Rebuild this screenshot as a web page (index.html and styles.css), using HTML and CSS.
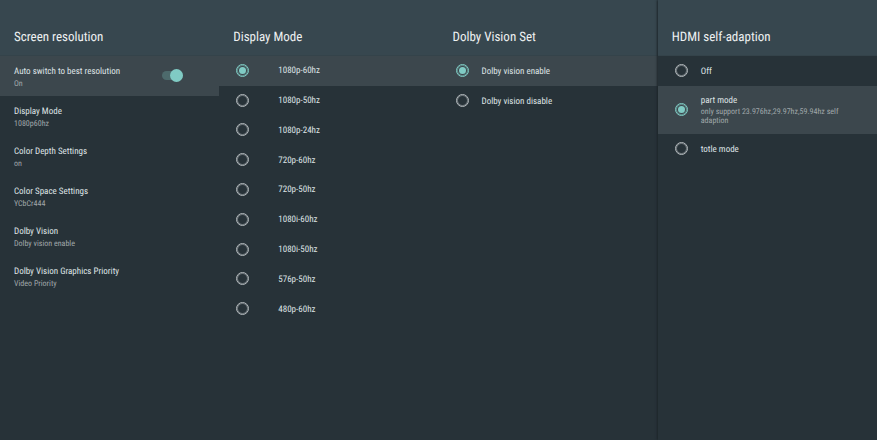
FILE: index.html
```html
<!DOCTYPE html>
<html lang="en">
<head>
<meta charset="utf-8">
<title>Screen resolution</title>
<link rel="stylesheet" href="styles.css">
</head>
<body>
<main class="panels">
  <section class="panel">
    <h2 class="title">Screen resolution</h2>
    <ul class="list settings">
      <li class="row active">
        <label class="text" for="auto"><span class="name">Auto switch to best resolution</span><span class="note">On</span></label>
        <input class="switch" type="checkbox" role="switch" id="auto" checked>
      </li>
      <li class="row"><a class="text" href="#mode"><span class="name">Display Mode</span><span class="note">1080p60hz</span></a></li>
      <li class="row"><a class="text" href="#depth"><span class="name">Color Depth Settings</span><span class="note">on</span></a></li>
      <li class="row"><a class="text" href="#space"><span class="name">Color Space Settings</span><span class="note">YCbCr444</span></a></li>
      <li class="row"><a class="text" href="#vision"><span class="name">Dolby Vision</span><span class="note">Dolby vision enable</span></a></li>
      <li class="row"><a class="text" href="#priority"><span class="name">Dolby Vision Graphics Priority</span><span class="note">Video Priority</span></a></li>
    </ul>
  </section>
  <section class="panel">
    <h2 class="title">Display Mode</h2>
    <div class="list modes">
      <label class="option wide active"><input class="radio" type="radio" name="mode" checked><span class="name">1080p-60hz</span></label>
      <label class="option wide"><input class="radio" type="radio" name="mode"><span class="name">1080p-50hz</span></label>
      <label class="option wide"><input class="radio" type="radio" name="mode"><span class="name">1080p-24hz</span></label>
      <label class="option wide"><input class="radio" type="radio" name="mode"><span class="name">720p-60hz</span></label>
      <label class="option wide"><input class="radio" type="radio" name="mode"><span class="name">720p-50hz</span></label>
      <label class="option wide"><input class="radio" type="radio" name="mode"><span class="name">1080i-60hz</span></label>
      <label class="option wide"><input class="radio" type="radio" name="mode"><span class="name">1080i-50hz</span></label>
      <label class="option wide"><input class="radio" type="radio" name="mode"><span class="name">576p-50hz</span></label>
      <label class="option wide"><input class="radio" type="radio" name="mode"><span class="name">480p-60hz</span></label>
    </div>
  </section>
  <section class="panel">
    <h2 class="title">Dolby Vision Set</h2>
    <div class="list">
      <label class="option active"><input class="radio" type="radio" name="dolby" checked><span class="name">Dolby vision enable</span></label>
      <label class="option"><input class="radio" type="radio" name="dolby"><span class="name">Dolby vision disable</span></label>
    </div>
  </section>
  <section class="panel overlay">
    <h2 class="title">HDMI self-adaption</h2>
    <div class="list">
      <label class="option"><input class="radio" type="radio" name="hdmi"><span class="name">Off</span></label>
      <label class="option active"><input class="radio" type="radio" name="hdmi" checked><span class="text"><span class="name">part mode</span><span class="note">only support 23.976hz,29.97hz,59.94hz self adaption</span></span></label>
      <label class="option"><input class="radio" type="radio" name="hdmi"><span class="name">totle mode</span></label>
    </div>
  </section>
</main>
</body>
</html>
```
FILE: styles.css
```css
* { box-sizing: border-box; }

body {
  margin: 0;
  background: #273238;
  color: #dfe3e5;
  font-family: "Roboto Condensed", Roboto, sans-serif;
  font-size: 9px;
  line-height: 12px;
  text-rendering: geometricPrecision;
}

.panels {
  display: grid;
  grid-template-columns: repeat(4, 1fr);
  min-height: 100vh;
}

.title {
  display: flex;
  align-items: flex-end;
  height: 56px;
  margin: 0;
  padding: 0 14px 9px;
  background: #37474f;
  border-bottom: 1px solid #34434a;
  color: #eef1f2;
  font-size: 13px;
  font-weight: 400;
  line-height: 16px;
}

.list {
  margin: 0;
  padding: 0;
  list-style: none;
}

.active { background: #3c474d; }

.row {
  display: flex;
  align-items: center;
  justify-content: space-between;
  height: 40px;
  padding: 0 36px 0 14px;
}

.text {
  display: flex;
  flex-direction: column;
  color: inherit;
  text-decoration: none;
}

.row .text { padding-top: 3px; }

.name { white-space: nowrap; }

.note {
  color: #a0a7aa;
  font-size: 8px;
  line-height: 11px;
}

.switch {
  appearance: none;
  position: relative;
  flex: none;
  width: 21px;
  height: 9px;
  margin: 0 0 1px;
  border-radius: 5px;
  background: #4d6a6c;
}

.switch::after {
  content: "";
  position: absolute;
  top: -2px;
  right: 0;
  width: 13px;
  height: 13px;
  border-radius: 50%;
  background: #80cbc4;
}

.modes {
  display: grid;
  grid-auto-rows: 1fr;
  min-height: 268px;
}

.option {
  display: flex;
  align-items: center;
  gap: 13px;
  padding: 0 28px 1px 17px;
}

.list:not(.modes) > .option { min-height: 30px; }

.wide { gap: 29px; }

.option > .name { padding-top: 2px; }

.option .text { padding: 9px 0 8px; }

.option .note { line-height: 9px; }

.radio {
  appearance: none;
  display: grid;
  place-items: center;
  flex: none;
  width: 13px;
  height: 13px;
  margin: 0;
  border: 1px solid #b4babd;
  border-radius: 50%;
  box-shadow: inset 0 0 0 1px #b4babd80;
}

.radio:checked {
  border-color: #80cbc4;
  box-shadow: inset 0 0 0 1px #80cbc480;
}

.radio:checked::after {
  content: "";
  width: 7px;
  height: 7px;
  border-radius: 50%;
  background: #80cbc4;
}

.overlay { box-shadow: -1px 0 2px #1c2529; }
```
